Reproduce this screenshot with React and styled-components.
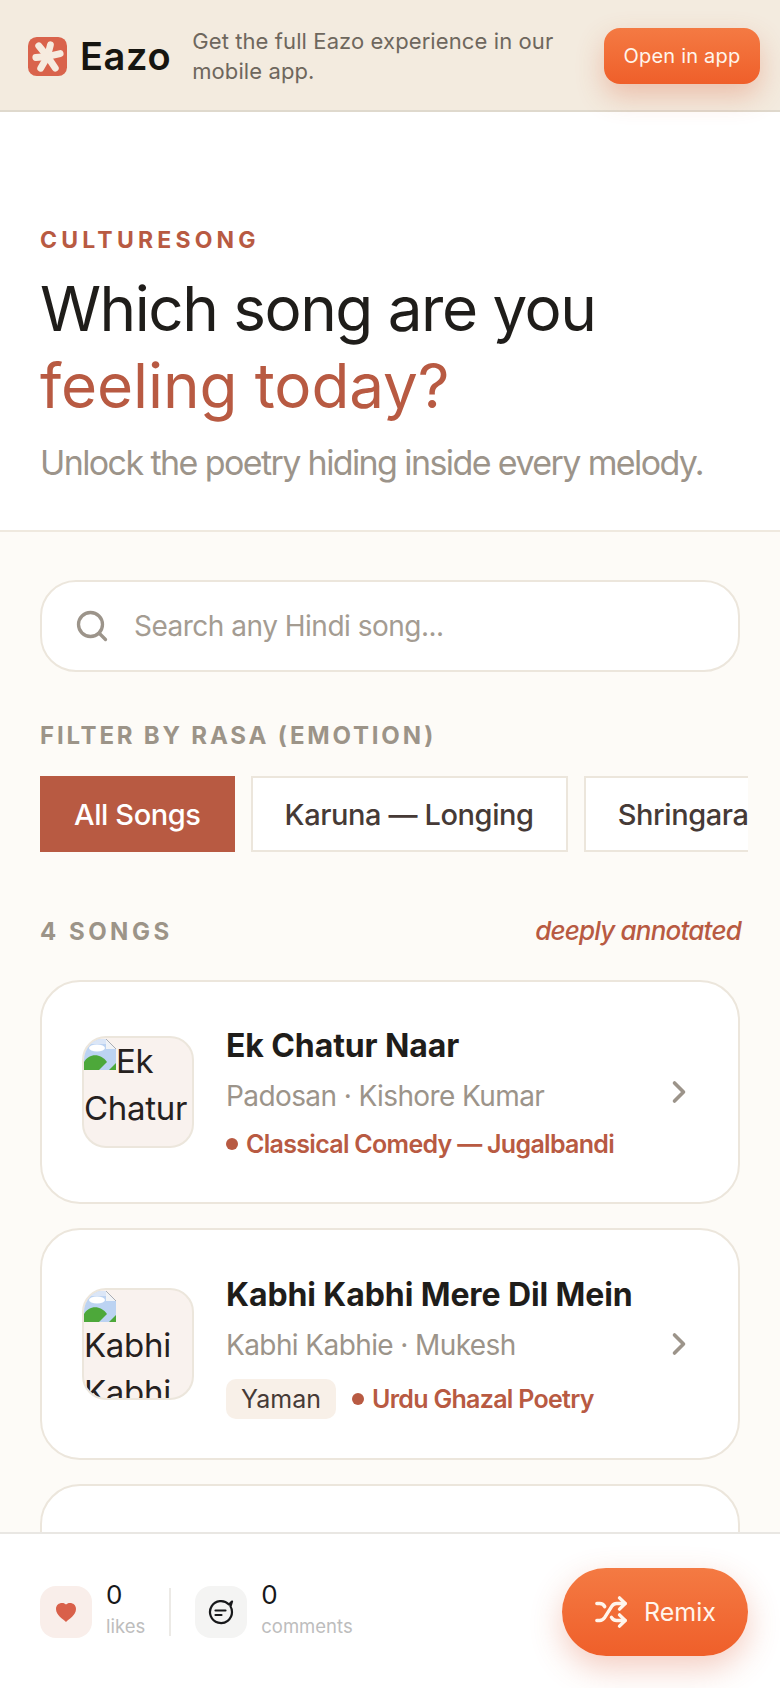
import React from "react";
import styled, { createGlobalStyle } from "styled-components";
import { ChevronRight, Search, Shuffle } from "lucide-react";

const GlobalStyle = createGlobalStyle`
  * { box-sizing: border-box; }
  html, body { margin: 0; height: 100%; }
  body { font-family: Inter, "Liberation Sans", sans-serif; background: #fff; }
  #root { height: 100%; }
`;

const Page = styled.div`
  height: 100vh;
  display: flex;
  flex-direction: column;
  overflow: hidden;
`;

const Banner = styled.header`
  position: relative;
  z-index: 2;
  flex: none;
  height: 112px;
  display: flex;
  align-items: center;
  padding: 2px 20px 0 28px;
  background: #f3ebdf;
  border-bottom: 2px solid #dfd9cd;
`;

const Wordmark = styled.span`
  margin-left: 13px;
  font-size: 38px;
  font-weight: 600;
  letter-spacing: 0.600px;
  color: #161510;
`;

const BannerText = styled.p`
  flex: 1;
  margin: 0 0 0 21px;
  font-size: 22px;
  line-height: 30px;
  letter-spacing: 0.100px;
  color: #6e675d;
`;

const OpenButton = styled.button`
  flex: none;
  width: 156px;
  height: 56px;
  border: 0;
  border-radius: 16px;
  font: 400 20px Inter, sans-serif;
  letter-spacing: 0.200px;
  color: #fff5ec;
  background: linear-gradient(180deg, #f47a43, #ef5f2a);
  box-shadow: 0 12px 28px rgba(220, 90, 50, 0.3);
`;

const Scroll = styled.div`
  flex: 1;
  min-height: 0;
  overflow: hidden;
  background: #fdfbf7;
`;

const Hero = styled.section`
  height: 420px;
  padding: 113px 40px 0;
  background: #fff;
  border-bottom: 2px solid #efe9df;
`;

const Eyebrow = styled.div`
  font-size: 23px;
  line-height: 30px;
  font-weight: 700;
  letter-spacing: 4.200px;
  color: #b85a42;
`;

const Title = styled.h1`
  margin: 15px 0 0;
  font-size: 62px;
  line-height: 77px;
  font-weight: 400;
  letter-spacing: -1.500px;
  color: #1f1d1a;
`;

const Accent = styled.span`
  display: block;
  letter-spacing: -0.100px;
  color: #b85a42;
`;

const Lead = styled.p`
  margin: 17px 0 0;
  font-size: 34px;
  line-height: 44px;
  letter-spacing: -1.600px;
  color: #9c948a;
`;

const Main = styled.main`
  padding: 48px 40px 0;
`;

const SearchBox = styled.div`
  height: 92px;
  display: flex;
  align-items: center;
  gap: 24px;
  padding: 0 32px;
  background: #fff;
  border: 2px solid #ece6dc;
  border-radius: 36px;
  font-size: 28px;
  letter-spacing: -0.500px;
  color: #a49c92;
`;

const SectionLabel = styled.div`
  font-size: 24px;
  line-height: 30px;
  font-weight: 700;
  letter-spacing: 3.500px;
  color: #9c9488;
`;

const FilterLabel = styled(SectionLabel)`
  margin-top: 49px;
  letter-spacing: 2.800px;
`;

const Chips = styled.div`
  display: flex;
  gap: 16px;
  width: 708px;
  margin-top: 25px;
  overflow: hidden;
`;

const Chip = styled.div`
  flex: none;
  height: 76px;
  display: flex;
  align-items: center;
  padding: 0 32px;
  font-size: 29px;
  font-weight: 500;
  letter-spacing: -0.400px;
  border: 2px solid ${props => (props.active ? "#b85a42" : "#ece6dc")};
  background: ${props => (props.active ? "#b85a42" : "#fff")};
  color: ${props => (props.active ? "#fff" : "#463a36")};
`;

const ListHead = styled.div`
  display: flex;
  justify-content: space-between;
  align-items: center;
  margin-top: 65px;
  height: 30px;
`;

const Note = styled.span`
  margin: 0 -1px 4px 0;
  font-size: 26px;
  font-style: italic;
  font-weight: 500;
  letter-spacing: -0.800px;
  color: #b85a42;
`;

const Card = styled.article`
  height: ${props => props.h}px;
  display: flex;
  align-items: center;
  margin-top: ${props => props.gap}px;
  padding: 0 40px;
  background: #fff;
  border: 2px solid #ece6dc;
  border-radius: 40px;
`;

const Thumb = styled.div`
  flex: none;
  width: 112px;
  height: 112px;
  overflow: hidden;
  background: #f9f2ee;
  border: 2px solid #ece6dc;
  border-radius: 24px;
  font-size: 33px;
  line-height: 47px;
  letter-spacing: -0.300px;
  color: #26211e;
`;

const BrokenIcon = styled.svg`
  float: left;
  width: 32px;
  height: 32px;
`;

const Info = styled.div`
  flex: 1;
  min-width: 0;
  margin: 6px 0 0 32px;
`;

const SongTitle = styled.div`
  font-size: 32px;
  line-height: 40px;
  font-weight: 700;
  letter-spacing: -0.100px;
  color: #1f1d1a;
`;

const SongSub = styled.div`
  margin-top: 10px;
  font-size: 28px;
  line-height: 40px;
  letter-spacing: -0.600px;
  color: #9c948a;
`;

const TagRow = styled.div`
  display: flex;
  align-items: center;
  margin-top: ${props => (props.spaced ? 14 : 8)}px;
  min-height: 40px;
  gap: 16px;
`;

const Raga = styled.span`
  height: 40px;
  padding: 0 15px;
  display: flex;
  align-items: center;
  background: #f8f0e8;
  border-radius: 10px;
  font-size: 25px;
  color: #463a36;
`;

const Mood = styled.span`
  display: flex;
  align-items: center;
  gap: 8px;
  font-size: 25px;
  font-weight: 600;
  letter-spacing: -0.700px;
  color: #b85a42;
  &::before {
    content: "";
    width: 12px;
    height: 12px;
    border-radius: 50%;
    background: #b85a42;
  }
`;

const Chevron = styled(ChevronRight)`
  flex: none;
  margin-right: 1px;
  color: #9c948a;
`;

const BottomBar = styled.footer`
  position: relative;
  z-index: 2;
  flex: none;
  height: 156px;
  display: flex;
  align-items: center;
  padding: 2px 32px 0 40px;
  background: #fff;
  border-top: 2px solid #e9e7e3;
`;

const Stat = styled.div`
  display: flex;
  align-items: center;
  gap: 14px;
`;

const StatIcon = styled.div`
  width: 52px;
  height: 52px;
  display: flex;
  align-items: center;
  justify-content: center;
  border-radius: 16px;
  background: ${props => props.tint};
`;

const StatText = styled.div`
  display: flex;
  flex-direction: column;
  margin-top: -6px;
`;

const StatNum = styled.span`
  font-size: 26px;
  line-height: 34px;
  color: #17181a;
`;

const StatLabel = styled.span`
  font-size: 18.500px;
  line-height: 28px;
  color: #bdbdbd;
`;

const Divider = styled.div`
  width: 2px;
  height: 48px;
  margin: 0 24px;
  background: #eceae6;
`;

const RemixButton = styled.button`
  margin-left: auto;
  width: 186px;
  height: 88px;
  display: flex;
  align-items: center;
  justify-content: center;
  gap: 16px;
  border: 0;
  border-radius: 44px;
  font: 400 25px Inter, sans-serif;
  color: #fff5ec;
  background: linear-gradient(180deg, #f47a43, #ef5f2a);
  box-shadow: 0 12px 32px rgba(220, 90, 50, 0.3);
`;

const Logo = () => (
  <svg width="39" height="39" viewBox="0 0 40 40">
    <rect width="40" height="40" rx="9" fill="#d9634c" />
    <g stroke="#f6ebdf" strokeWidth="7" strokeLinecap="round">
      <line x1="20" y1="20" x2="23" y2="8" />
      <line x1="20" y1="20" x2="33" y2="17" />
      <line x1="20" y1="20" x2="28" y2="32" />
      <line x1="20" y1="20" x2="13" y2="32" />
      <line x1="20" y1="20" x2="8" y2="21" />
      <line x1="20" y1="20" x2="11" y2="9" />
    </g>
  </svg>
);

const Broken = () => (
  <BrokenIcon viewBox="0 0 32 32">
    <path d="M0 1h22l10 10v21H0z" fill="#bcd3f2" />
    <path d="M0 1h22v5H0z" fill="#dbe6f7" />
    <path d="M22 1l10 10H22z" fill="#f1f3f6" />
    <path d="M22 1l10 10" stroke="#a9adb4" strokeWidth="1" fill="none" />
    <ellipse cx="13" cy="10" rx="8" ry="3.500" fill="#fff" />
    <path d="M0 32v-8c5-9 17-9 23 0l-8 8z" fill="#4da83a" />
    <path d="M25 32l7-7v7z" fill="#4da83a" />
  </BrokenIcon>
);

const Heart = () => (
  <svg width="22" height="22" viewBox="0 0 22 22">
    <path
      d="M11 21C8 18 1 14 1 8c0-4 3-6 6-6 2 0 3 .6 4 1.600C12 2.600 13 2 15 2c3 0 6 2 6 6 0 6-7 10-10 13z"
      fill="#d9604a"
    />
  </svg>
);

const Comment = () => (
  <svg width="26" height="26" viewBox="0 0 26 26" fill="none" stroke="#17181a" strokeWidth="2.200">
    <path d="M21 5.500A11 11 0 1 0 24 13c0-2-.5-4-1.500-5.500L24 2.500z" strokeLinejoin="round" />
    <path d="M7.500 11.500h10M7.500 16h6" strokeLinecap="round" />
  </svg>
);

const songs = [
  { title: "Ek Chatur Naar", alt: "Ek Chatur", sub: "Padosan · Kishore Kumar", mood: "Classical Comedy — Jugalbandi", h: 224, gap: 33 },
  { title: "Kabhi Kabhi Mere Dil Mein", alt: "Kabhi Kabhi", sub: "Kabhi Kabhie · Mukesh", raga: "Yaman", mood: "Urdu Ghazal Poetry", h: 232, gap: 24 },
];

export default function App() {
  return (
    <Page>
      <GlobalStyle />
      <Banner>
        <Logo />
        <Wordmark>Eazo</Wordmark>
        <BannerText>Get the full Eazo experience in our mobile app.</BannerText>
        <OpenButton>Open in app</OpenButton>
      </Banner>
      <Scroll>
        <Hero>
          <Eyebrow>CULTURESONG</Eyebrow>
          <Title>
            Which song are you
            <Accent>feeling today?</Accent>
          </Title>
          <Lead>Unlock the poetry hiding inside every melody.</Lead>
        </Hero>
        <Main>
          <SearchBox>
            <Search size={36} strokeWidth={2.2} color="#9c948a" />
            Search any Hindi song...
          </SearchBox>
          <FilterLabel>FILTER BY RASA (EMOTION)</FilterLabel>
          <Chips>
            <Chip active>All Songs</Chip>
            <Chip>Karuna — Longing</Chip>
            <Chip>Shringara — Love</Chip>
          </Chips>
          <ListHead>
            <SectionLabel>4 SONGS</SectionLabel>
            <Note>deeply annotated</Note>
          </ListHead>
          {songs.map(song => (
            <Card key={song.title} h={song.h} gap={song.gap}>
              <Thumb>
                <Broken />
                {song.alt}
              </Thumb>
              <Info>
                <SongTitle>{song.title}</SongTitle>
                <SongSub>{song.sub}</SongSub>
                <TagRow spaced={!!song.raga}>
                  {song.raga && <Raga>{song.raga}</Raga>}
                  <Mood>{song.mood}</Mood>
                </TagRow>
              </Info>
              <Chevron size={36} strokeWidth={2.4} />
            </Card>
          ))}
          <Card h={231} gap={24} />
        </Main>
      </Scroll>
      <BottomBar>
        <Stat>
          <StatIcon tint="#f9eeea"><Heart /></StatIcon>
          <StatText>
            <StatNum>0</StatNum>
            <StatLabel>likes</StatLabel>
          </StatText>
        </Stat>
        <Divider />
        <Stat>
          <StatIcon tint="#f4f4f3"><Comment /></StatIcon>
          <StatText>
            <StatNum>0</StatNum>
            <StatLabel>comments</StatLabel>
          </StatText>
        </Stat>
        <RemixButton>
          <Shuffle size={34} strokeWidth={2.4} />
          Remix
        </RemixButton>
      </BottomBar>
    </Page>
  );
}
